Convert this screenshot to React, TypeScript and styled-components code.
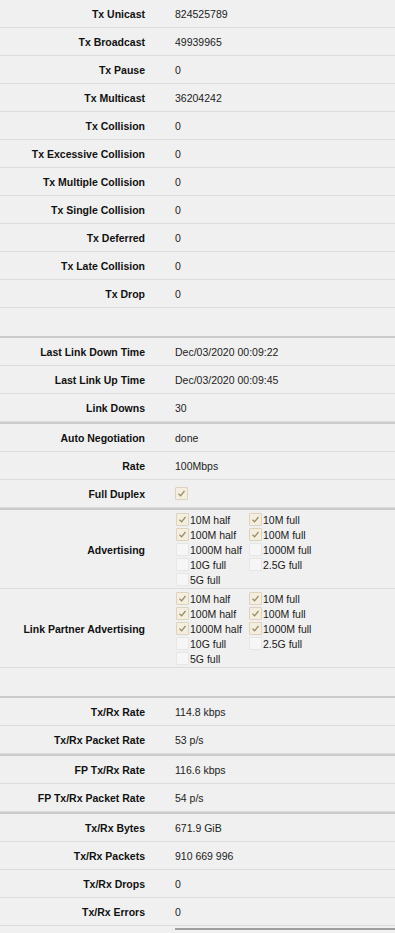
import React from "react";
import styled, { createGlobalStyle } from "styled-components";

const GlobalStyle = createGlobalStyle`
  html, body {
    margin: 0;
    padding: 0;
    background: #f0f0f0;
  }
  body {
    font-family: "Liberation Sans", Arial, sans-serif;
    font-size: 10.5px;
    color: #1a1a1a;
  }
`;

const Page = styled.div`
  width: 395px;
  background: #f0f0f0;
`;

const Section = styled.div<{ $first?: boolean }>`
  border-top: ${(p) => (p.$first ? "none" : "2px solid #cbcbcb")};
`;

const Row = styled.div<{ $tall?: boolean }>`
  display: grid;
  grid-template-columns: 145px 1fr;
  align-items: center;
  min-height: 27px;
  border-bottom: 1px solid #dcdcdc;
  padding: ${(p) => (p.$tall ? "2px 0 1px" : "0")};
`;

const Spacer = styled.div`
  height: 28px;
`;

const Label = styled.div`
  text-align: right;
  font-weight: bold;
  color: #111;
`;

const Value = styled.div`
  padding-left: 30px;
  color: #222;
`;

const CheckGrid = styled.div`
  display: grid;
  grid-template-columns: 73px 80px;
  grid-auto-rows: 15px;
  padding-left: 31px;
`;

const CheckItem = styled.div`
  display: flex;
  align-items: center;
  gap: 1px;
  white-space: nowrap;
`;

const Box = styled.span<{ $on?: boolean }>`
  display: inline-flex;
  align-items: center;
  justify-content: center;
  width: 11px;
  height: 11px;
  border: 1px solid ${(p) => (p.$on ? "#ddd3bd" : "#e6e6e6")};
  background: ${(p) => (p.$on ? "#f4eedf" : "#f6f6f6")};
  border-radius: 1px;
  flex-shrink: 0;
`;

const Bottom = styled.div`
  margin-left: 175px;
  margin-top: 2px;
  height: 4px;
  border-top: 2px solid #9e9e9e;
`;

const Tick = () => (
  <svg width="9" height="9" viewBox="0 0 9 9">
    <path d="M1.5 4.8 L3.6 6.8 L7.5 2" fill="none" stroke="#9a8b68" strokeWidth="1.3" />
  </svg>
);

const Check = ({ on, text }: { on: boolean; text?: string }) => (
  <CheckItem>
    <Box $on={on}>{on && <Tick />}</Box>
    {text}
  </CheckItem>
);

type Item = [string, boolean];

const advertising: Item[] = [
  ["10M half", true],
  ["10M full", true],
  ["100M half", true],
  ["100M full", true],
  ["1000M half", false],
  ["1000M full", false],
  ["10G full", false],
  ["2.5G full", false],
  ["5G full", false],
];

const partner: Item[] = [
  ["10M half", true],
  ["10M full", true],
  ["100M half", true],
  ["100M full", true],
  ["1000M half", true],
  ["1000M full", true],
  ["10G full", false],
  ["2.5G full", false],
  ["5G full", false],
];

const txRows: [string, string][] = [
  ["Tx Unicast", "824525789"],
  ["Tx Broadcast", "49939965"],
  ["Tx Pause", "0"],
  ["Tx Multicast", "36204242"],
  ["Tx Collision", "0"],
  ["Tx Excessive Collision", "0"],
  ["Tx Multiple Collision", "0"],
  ["Tx Single Collision", "0"],
  ["Tx Deferred", "0"],
  ["Tx Late Collision", "0"],
  ["Tx Drop", "0"],
];

const Field = ({ label, value }: { label: string; value: React.ReactNode }) => (
  <Row>
    <Label>{label}</Label>
    <Value>{value}</Value>
  </Row>
);

const CheckList = ({ label, items }: { label: string; items: Item[] }) => (
  <Row $tall>
    <Label>{label}</Label>
    <CheckGrid>
      {items.map(([t, on]) => (
        <Check key={t} on={on} text={t} />
      ))}
    </CheckGrid>
  </Row>
);

const App: React.FC = () => {
  return (
    <Page>
      <GlobalStyle />
      <Section $first>
        {txRows.map(([l, v]) => (
          <Field key={l} label={l} value={v} />
        ))}
        <Spacer />
      </Section>
      <Section>
        <Field label="Last Link Down Time" value="Dec/03/2020 00:09:22" />
        <Field label="Last Link Up Time" value="Dec/03/2020 00:09:45" />
        <Field label="Link Downs" value="30" />
      </Section>
      <Section>
        <Field label="Auto Negotiation" value="done" />
        <Field label="Rate" value="100Mbps" />
        <Row>
          <Label>Full Duplex</Label>
          <Value>
            <Check on />
          </Value>
        </Row>
      </Section>
      <Section>
        <CheckList label="Advertising" items={advertising} />
        <CheckList label="Link Partner Advertising" items={partner} />
        <Spacer />
      </Section>
      <Section>
        <Field label="Tx/Rx Rate" value="114.8 kbps" />
        <Field label="Tx/Rx Packet Rate" value="53 p/s" />
      </Section>
      <Section>
        <Field label="FP Tx/Rx Rate" value="116.6 kbps" />
        <Field label="FP Tx/Rx Packet Rate" value="54 p/s" />
      </Section>
      <Section>
        <Field label="Tx/Rx Bytes" value="671.9 GiB" />
        <Field label="Tx/Rx Packets" value="910 669 996" />
        <Field label="Tx/Rx Drops" value="0" />
        <Field label="Tx/Rx Errors" value="0" />
        <Bottom />
      </Section>
    </Page>
  );
};

export default App;
